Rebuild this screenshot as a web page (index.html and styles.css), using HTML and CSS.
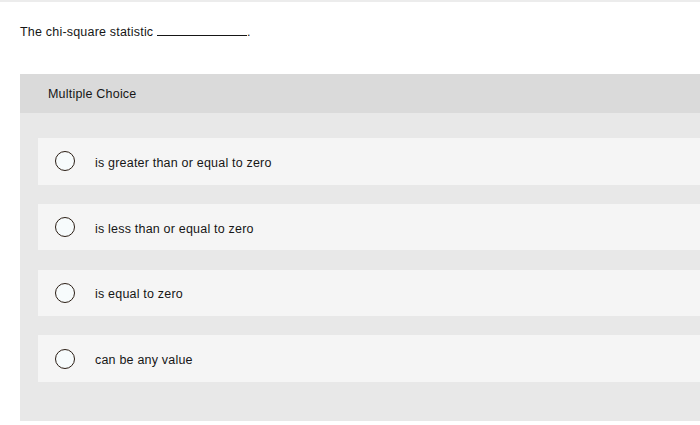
FILE: index.html
```html
<!doctype html>
<html lang="en">
<head>
  <meta charset="utf-8">
  <title>Multiple Choice Question</title>
  <link rel="stylesheet" href="styles.css">
</head>
<body>
  <div class="page">
    <p class="question">The chi-square statistic <span class="blank"></span>.</p>
    <section class="choices">
      <h2 class="choices-head">Multiple Choice</h2>
      <ul class="options">
        <li class="option"><span class="radio"></span><span class="option-text">is greater than or equal to zero</span></li>
        <li class="option"><span class="radio"></span><span class="option-text">is less than or equal to zero</span></li>
        <li class="option"><span class="radio"></span><span class="option-text">is equal to zero</span></li>
        <li class="option"><span class="radio"></span><span class="option-text">can be any value</span></li>
      </ul>
    </section>
  </div>
</body>
</html>
```

FILE: styles.css
```css
:root {
  --text: #161616;
  --panel: #e8e8e8;
  --panel-head: #dadada;
  --card: #f5f5f5;
  --line: #ececec;
}

* {
  box-sizing: border-box;
}

body {
  margin: 0;
  background: #fff;
  color: var(--text);
  font: 12.5px/16px "Liberation Sans", Arial, sans-serif;
  letter-spacing: 0.2px;
}

.page {
  border-top: 2px solid var(--line);
  height: 425px;
  overflow: hidden;
}

.question {
  margin: 0;
  padding: 22px 20px 0;
  height: 72px;
}

.blank {
  display: inline-block;
  width: 90px;
  border-bottom: 1px solid var(--text);
  vertical-align: baseline;
}

.choices {
  margin-left: 20px;
  background: var(--panel);
  height: 347px;
}

.choices-head {
  margin: 0;
  padding-left: 28px;
  height: 39px;
  line-height: 41px;
  background: var(--panel-head);
  font-size: inherit;
  font-weight: normal;
}

.options {
  list-style: none;
  margin: 0;
  padding: 25px 0 0 18px;
  display: flex;
  flex-direction: column;
  gap: 19.3px;
}

.option {
  display: flex;
  align-items: center;
  height: 46.5px;
  padding-left: 17px;
  background: var(--card);
}

.option-text {
  padding-top: 3px;
}

.radio {
  width: 20px;
  height: 20px;
  border: 1.5px solid #2a1d14;
  border-radius: 50%;
  background: #f7fbfc;
  margin-right: 20px;
  flex: none;
}
```
